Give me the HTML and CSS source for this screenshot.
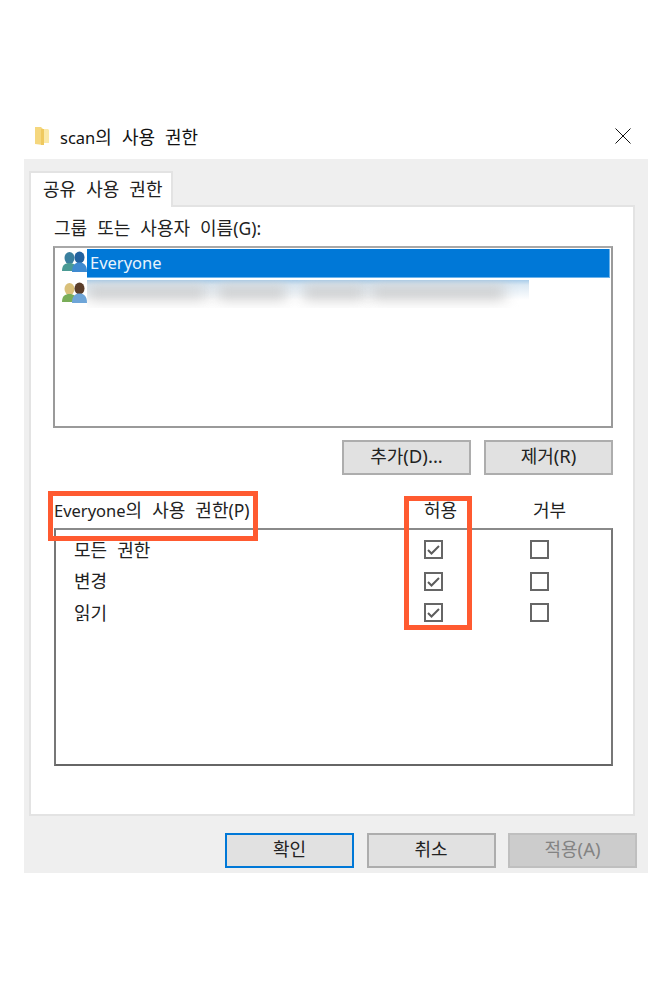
FILE: index.html
```html
<!DOCTYPE html>
<html lang="ko">
<head>
<meta charset="utf-8">
<title>scan의 사용 권한</title>
<link rel="stylesheet" href="styles.css">
</head>
<body>
<div class="dialog">
  <header class="titlebar">
    <svg class="folder" width="16" height="20" viewBox="0 0 16 20"><path d="M1 1h6l2 2v16l-8-1z" fill="#f5d77e"/><path d="M8 3h6l1 1v13H8z" fill="#fbe9a8"/><path d="M7 3h3v16H7z" fill="#efc95f"/></svg>
    <span class="title"><span class="lat">scan</span>의 사용 권한</span>
    <svg class="close" width="16" height="16" viewBox="0 0 16 16"><path d="M.5.5l15 15M15.500.5l-15 15" stroke="#111" stroke-width="1" fill="none"/></svg>
  </header>
  <div class="body">
    <div class="tab">공유 사용 권한</div>
    <section class="panel">
      <div class="label group-label">그룹 또는 사용자 이름<span class="par">(G):</span></div>
      <div class="listbox">
        <div class="list-row">
          <svg class="people" width="25" height="24" viewBox="0 0 25 24">
            <ellipse cx="7.500" cy="7" rx="5" ry="6" fill="#3a7f9e"/><path d="M0 20c0-6 3-8 7.500-8s7 2 7 8z" fill="#4a9a94"/>
            <ellipse cx="17.500" cy="6.500" rx="5" ry="6" fill="#23629f"/><path d="M10 21c0-7 3-9.500 7.500-9.500S25 14 25 21z" fill="#3f8ad0"/>
          </svg>
          <div class="selected"><span class="lat">Everyone</span></div>
        </div>
        <div class="list-row">
          <svg class="people" width="25" height="24" viewBox="0 0 25 24">
            <ellipse cx="7.500" cy="7" rx="5" ry="6" fill="#d9c07a"/><path d="M0 20c0-6 3-8 7.500-8s7 2 7 8z" fill="#79ad58"/>
            <ellipse cx="17.500" cy="6.500" rx="5" ry="6" fill="#5a3d2a"/><path d="M10 21c0-7 3-9.500 7.500-9.500S25 14 25 21z" fill="#6ea5d8"/>
          </svg>
          <div class="redacted"><div class="smear s1"></div><div class="smear s2"></div><div class="smear s3"></div><div class="smear s4"></div></div>
        </div>
      </div>
      <div class="actions">
        <button class="btn">추가<span class="par">(D)...</span></button>
        <button class="btn">제거<span class="par">(R)</span></button>
      </div>
      <div class="perm-head">
        <span class="label perm-title"><span class="lat">Everyone</span>의 사용 권한<span class="par">(P)</span></span>
        <span class="col-a">허용</span>
        <span class="col-b">거부</span>
      </div>
      <div class="perm-box">
        <div class="perm-row"><span class="perm-name">모든 권한</span><span class="check"><svg width="15" height="15" viewBox="0 0 15 15"><path d="M2 8l3.500 3.500L13 4" fill="none" stroke="#5c5c5c" stroke-width="2"/></svg></span><span class="check"></span></div>
        <div class="perm-row"><span class="perm-name">변경</span><span class="check"><svg width="15" height="15" viewBox="0 0 15 15"><path d="M2 8l3.500 3.500L13 4" fill="none" stroke="#5c5c5c" stroke-width="2"/></svg></span><span class="check"></span></div>
        <div class="perm-row"><span class="perm-name">읽기</span><span class="check"><svg width="15" height="15" viewBox="0 0 15 15"><path d="M2 8l3.500 3.500L13 4" fill="none" stroke="#5c5c5c" stroke-width="2"/></svg></span><span class="check"></span></div>
      </div>
      <div class="mark mark-label"></div>
      <div class="mark mark-allow"></div>
    </section>
    <footer class="footer">
      <button class="btn primary">확인</button>
      <button class="btn">취소</button>
      <button class="btn disabled">적용<span class="par">(A)</span></button>
    </footer>
  </div>
</div>
</body>
</html>
```
FILE: styles.css
```css
* { box-sizing: border-box; }
html, body { margin: 0; background: #fff; }
body {
  font-family: "Noto Sans CJK KR", "Noto Sans", sans-serif;
  font-size: 18px;
  color: #222;
  word-spacing: 5px;
}
.lat { font-family: "Noto Sans", sans-serif; font-size: 16.500px; }
.par { font-family: "Noto Sans", sans-serif; font-size: 17.500px; }
.dialog { margin: 115px 0 0 24px; width: 624px; }
.titlebar { height: 44px; display: flex; align-items: center; padding: 0 17px 0 10px; }
.folder { margin: 0 10px 3px 0; }
.title { flex: 1; color: #111; line-height: 28px; }
.close { margin-bottom: 2px; }
.body { background: #efefef; height: 714px; padding: 12px 10px 0 5px; }
.tab {
  width: 144px; height: 36px; margin-bottom: -2px; position: relative; z-index: 1;
  background: #fff; border: 2px solid #e3e3e3; border-bottom: 0;
  padding-left: 12px; line-height: 30px;
}
.panel {
  position: relative; width: 606px; height: 611px;
  background: #fff; border: 2px solid #e3e3e3; padding: 8px 19px 0 22px;
}
.label { line-height: 24px; white-space: nowrap; }
.group-label { height: 31px; padding-left: 1px; }
.listbox {
  height: 182px; width: 560px;
  border: 2px solid #9a9a9a; border-top-color: #a8a8a8; padding: 1px 1px 0 7px;
}
.list-row { display: flex; height: 30px; align-items: stretch; margin-bottom: 1px; }
.people { flex: none; margin-top: 2px; }
.selected {
  flex: 1; margin-bottom: 1px; background: #0078d7; color: #e8f3fc;
  line-height: 25px; padding-left: 3px;
  border: 1px solid #6db3ea; border-width: 0 1px 1px 0;
}
.redacted { position: relative; width: 442px; height: 28px; overflow: hidden;
  background: linear-gradient(#a9cdea 0, #dbe8f3 5px, #fff 20px); }
.smear { position: absolute; top: 6px; height: 13px; background: #c8c8c8; filter: blur(7px); }
.s1 { left: 0; width: 120px; }
.s2 { left: 130px; width: 70px; }
.s3 { left: 216px; width: 62px; }
.s4 { left: 284px; width: 134px; }
.actions { display: flex; justify-content: flex-end; gap: 13px; width: 560px; margin-top: 12px; }
.btn {
  flex: none; width: 129px; height: 35px; padding: 0 0 5px; background: #e1e1e1; border: 2px solid #adadad;
  font: inherit; color: #222; word-spacing: inherit;
}
.btn .par { font-size: 18.500px; }
.perm-head { display: flex; height: 53px; padding-top: 22px; }
.perm-title { width: 371px; flex: none; line-height: 24px; padding-left: 1px; }
.col-a, .col-b { flex: none; width: 109px; line-height: 24px; }
.perm-box { width: 559px; margin-left: 1px; height: 238px; border: 2px solid #7f7f7f; border-color: #8a8a8a #777 #666 #777; padding-top: 4px; }
.perm-row { display: flex; align-items: center; height: 31.500px; padding-left: 18px; }
.perm-name { flex: none; width: 350px; line-height: 24px; margin-bottom: 2px; }
.check { flex: none; width: 19px; height: 19px; border: 2px solid #666; margin-right: 87px; display: flex; align-items: center; justify-content: center; }
.mark { position: absolute; border: 5px solid #ff5a30; }
.mark-label { left: 17px; top: 284px; width: 210px; height: 50px; }
.mark-allow { left: 373px; top: 289px; width: 68px; height: 134px; }
.footer { display: flex; justify-content: flex-end; gap: 12.500px; margin-top: 17px; width: 608px; }
.primary { border-color: #0078d7; }
.disabled { background: #ccc; border-color: #bfbfbf; color: #838383; }
```
